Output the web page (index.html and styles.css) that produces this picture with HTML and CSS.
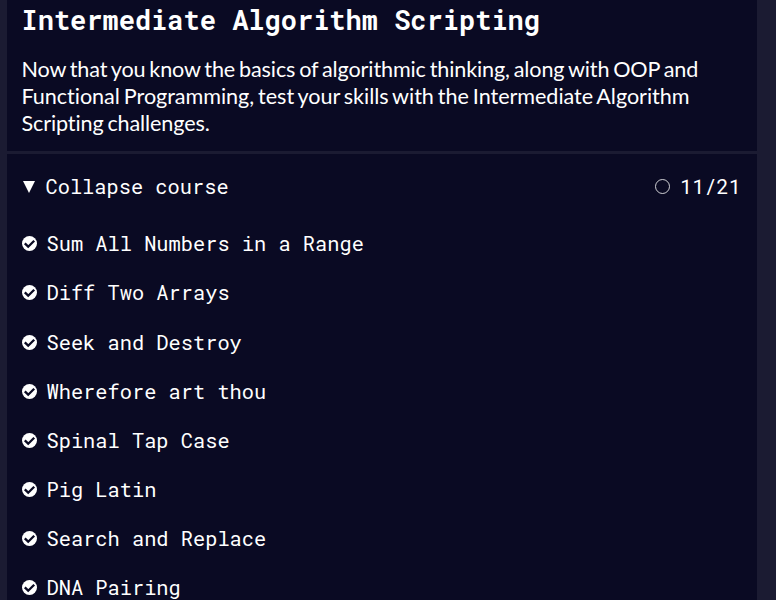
FILE: index.html
```html
<!DOCTYPE html>
<html lang="en">
<head>
<meta charset="utf-8">
<title>Intermediate Algorithm Scripting</title>
<link rel="stylesheet" href="styles.css">
</head>
<body>
<svg class="defs" aria-hidden="true">
  <symbol id="check" viewBox="0 0 15 15">
    <circle cx="7.5" cy="7.5" r="7.5" fill="#fff"/>
    <path d="M2.8 7.4 6.2 10.7 12.2 4.7" fill="none" stroke="#0a0a23" stroke-width="2.3"/>
  </symbol>
</svg>
<main class="block">
  <header class="intro">
    <h1 class="title">Intermediate Algorithm Scripting</h1>
    <p class="description">Now that you know the basics of algorithmic thinking, along with OOP and<br><span class="loose">Functional Programming, test your skills with the Intermediate Algorithm</span><br>Scripting challenges.</p>
  </header>
  <div class="toggle">
    <svg class="arrow" viewBox="0 0 12 12"><path d="M0 0H12L6 12Z" fill="#fff"/></svg>
    <span class="label">Collapse course</span>
    <svg class="ring" viewBox="0 0 15 15"><circle cx="7.5" cy="7.5" r="7" fill="none" stroke="#fff" stroke-width=".8"/></svg>
    <span class="count">11/21</span>
  </div>
  <ul class="challenges">
    <li><svg class="check"><use href="#check"/></svg>Sum All Numbers in a Range</li>
    <li><svg class="check"><use href="#check"/></svg>Diff Two Arrays</li>
    <li><svg class="check"><use href="#check"/></svg>Seek and Destroy</li>
    <li><svg class="check"><use href="#check"/></svg>Wherefore art thou</li>
    <li><svg class="check"><use href="#check"/></svg>Spinal Tap Case</li>
    <li><svg class="check"><use href="#check"/></svg>Pig Latin</li>
    <li><svg class="check"><use href="#check"/></svg>Search and Replace</li>
    <li><svg class="check"><use href="#check"/></svg>DNA Pairing</li>
  </ul>
</main>
</body>
</html>
```
FILE: styles.css
```css
* { box-sizing: border-box; }
body {
  margin: 0;
  height: 600px;
  overflow: hidden;
  background: #1b1b32;
  color: #fff;
  font-family: "Roboto Mono", "DejaVu Sans Mono", monospace;
  font-size: 20.35px;
}
.defs { display: none; }
.block {
  width: 750px;
  height: 600px;
  margin-left: 7px;
  overflow: hidden;
  background: #0a0a23;
}
.intro {
  height: 154px;
  padding: 2px 15px 0 14.5px;
  border-bottom: 3px solid #1b1b32;
}
.title {
  margin: 0;
  font-size: 27px;
  line-height: 36px;
  font-weight: 700;
  white-space: nowrap;
}
.description {
  margin: 18px 0 0;
  font-family: Lato, sans-serif;
  font-size: 21.6px;
  line-height: 27px;
  font-variant-ligatures: none;
  word-spacing: -1.5px;
  letter-spacing: -.13px;
  white-space: nowrap;
}
.loose { letter-spacing: -.05px; }
.toggle {
  display: flex;
  align-items: center;
  height: 65px;
  padding: 0 16px;
}
.arrow { width: 12px; height: 12px; margin-right: 10.5px; }
.label { flex: 1; }
.ring { width: 15px; height: 15px; margin-right: 10.4px; }
.challenges {
  margin: 0;
  padding: .2px 15px 0;
  list-style: none;
}
.challenges li {
  display: flex;
  align-items: center;
  height: 49.15px;
  white-space: nowrap;
}
.check { width: 15px; height: 15px; margin-right: 9.5px; flex: none; }
```
